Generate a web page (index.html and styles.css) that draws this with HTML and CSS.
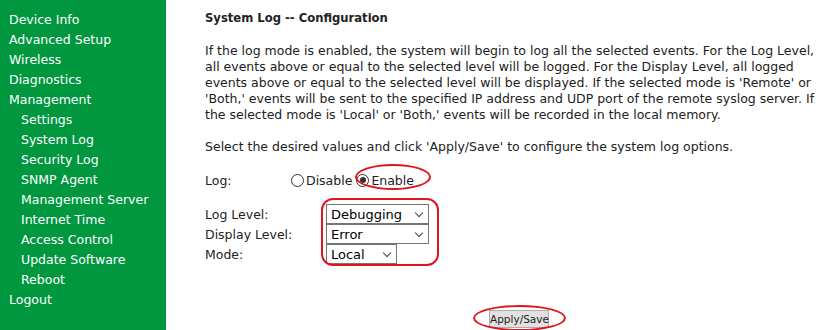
FILE: index.html
```html
<!DOCTYPE html>
<html>
<head>
<meta charset="utf-8">
<link rel="stylesheet" href="styles.css">
</head>
<body>
<div class="page">
  <nav class="menu">
    <div class="item">Device Info</div>
    <div class="item">Advanced Setup</div>
    <div class="item">Wireless</div>
    <div class="item">Diagnostics</div>
    <div class="item">Management</div>
    <div class="item sub">Settings</div>
    <div class="item sub">System Log</div>
    <div class="item sub">Security Log</div>
    <div class="item sub">SNMP Agent</div>
    <div class="item sub">Management Server</div>
    <div class="item sub">Internet Time</div>
    <div class="item sub">Access Control</div>
    <div class="item sub">Update Software</div>
    <div class="item sub">Reboot</div>
    <div class="item">Logout</div>
  </nav>
  <main class="content">
    <div class="title">System Log -- Configuration</div>
    <p class="desc">If the log mode is enabled, the system will begin to log all the selected events. For the Log Level, all events above or equal to the selected level will be logged. For the Display Level, all logged events above or equal to the selected level will be displayed. If the selected mode is 'Remote' or 'Both,' events will be sent to the specified IP address and UDP port of the remote syslog server. If the selected mode is 'Local' or 'Both,' events will be recorded in the local memory.</p>
    <p class="select-note">Select the desired values and click 'Apply/Save' to configure the system log options.</p>
    <div class="logrow">
      <span class="label">Log:</span>
      <span class="radio"><span class="dot"></span>Disable</span><span class="radio"><span class="dot on"></span>Enable</span>
      <span class="mark mark-enable"></span>
    </div>
    <div class="grid">
      <span class="label">Log Level:</span>
      <span class="sel wide">Debugging<span class="chev"></span></span>
      <span class="label">Display Level:</span>
      <span class="sel wide">Error<span class="chev"></span></span>
      <span class="label">Mode:</span>
      <span class="sel narrow">Local<span class="chev"></span></span>
      <span class="mark mark-selects"></span>
    </div>
    <div class="actions">
      <span class="btn">Apply/Save<span class="mark mark-btn"></span></span>
    </div>
  </main>
</div>
</body>
</html>
```
FILE: styles.css
```css
* { box-sizing: border-box; }
html, body { margin: 0; padding: 0; background: #fff; }
body { width: 836px; height: 330px; overflow: hidden; font-family: "DejaVu Sans", sans-serif; font-size: 12.5px; color: #222; }
.page { display: flex; height: 330px; }
.menu { width: 166px; background: #00973f; padding-top: 10px; flex: none; }
.item { color: #fff; height: 20px; line-height: 20px; padding-left: 9px; font-size: 12.5px; white-space: nowrap; }
.item.sub { padding-left: 21px; }
.content { padding-left: 39px; padding-top: 10px; flex: 1; position: relative; }
.title { font-weight: bold; line-height: 16px; color: #222; font-size: 11.6px; }
.desc { margin: 17px 0 0; line-height: 16px; width: 626px; }
.select-note { margin: 16px 0 0; line-height: 16px; }
.logrow { position: relative; display: flex; align-items: center; margin-top: 15px; height: 20px; }
.logrow .label { width: 86px; }
.radio { display: inline-flex; align-items: center; margin-right: 4px; }
.dot { width: 13px; height: 13px; border: 1px solid #333; border-radius: 50%; margin-right: 2px; position: relative; background: #fff; }
.dot.on::after { content: ""; position: absolute; left: 2.5px; top: 2.5px; width: 6px; height: 6px; border-radius: 50%; background: #333; }
.grid { position: relative; display: grid; grid-template-columns: 121px auto; grid-auto-rows: 20px; margin-top: 14px; justify-items: start; align-items: center; }
.sel { position: relative; display: flex; align-items: center; height: 20px; border: 1px solid #767676; padding-left: 4px; font-size: 13px; background: #fff; color: #000; }
.sel.wide { width: 103px; }
.sel.narrow { width: 71px; }
.chev { position: absolute; right: 6px; top: 5px; width: 6px; height: 6px; border-right: 1px solid #444; border-bottom: 1px solid #444; transform: rotate(45deg); }
.actions { margin-top: 46px; display: flex; padding-left: 284px; }
.btn { position: relative; display: inline-block; width: 60px; height: 18px; line-height: 16px; text-align: center; font-size: 10.5px; background: #e1e1e1; border: 1px solid #adadad; color: #222; }
.mark { position: absolute; border: 2px solid #e0141e; border-radius: 50%; pointer-events: none; }
.mark-enable { left: 150px; top: -6px; width: 76px; height: 26px; }
.mark-selects { left: 116px; top: -6px; width: 118px; height: 68px; border-radius: 12px; }
.mark-btn { left: -17px; top: -6px; width: 93px; height: 26px; }
```
